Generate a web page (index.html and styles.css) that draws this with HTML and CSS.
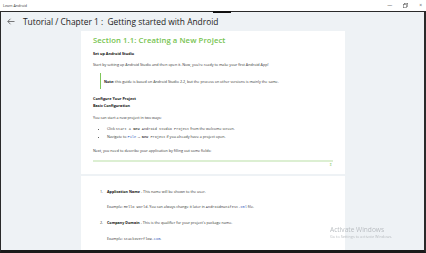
FILE: index.html
```html
<!DOCTYPE html>
<html lang="en">
  <head>
    <meta charset="UTF-8" />
    <title>Learn Android</title>
    <link rel="stylesheet" href="styles.css">
  </head>
  <body>
    <div class="titlebar">
      <span class="app-name">Learn Android</span>
      <div class="controls">
        <span class="ctl">&#8212;</span>
        <svg class="ctl-icon" width="5" height="5" viewBox="0 0 10 10"><rect x="3" y="0.5" width="6.5" height="6.5" fill="none" stroke="#555" stroke-width="1"/><rect x="0.5" y="3" width="6.5" height="6.5" fill="#fff" stroke="#555" stroke-width="1"/></svg>
        <span class="ctl">&#215;</span>
      </div>
    </div>
    <div class="tab-grip"></div>

    <div class="app">
      <div class="header">
        <svg class="back" width="8" height="7" viewBox="0 0 16 14"><path d="M15 7H2M7 1.5L1.5 7 7 12.5" fill="none" stroke="#444" stroke-width="1.4"/></svg>
        <h1>Tutorial / Chapter 1 :&nbsp; Getting started with Android</h1>
      </div>

      <div class="content">
        <div class="card">
          <h2>Section 1.1: Creating a New Project</h2>
          <h3>Set up Android Studio</h3>
          <p class="gap-s">Start by setting up Android Studio and then open it. Now, you're ready to make your first Android App!</p>
          <div class="note"><b>Note:</b> this guide is based on Android Studio 2.2, but the process on other versions is mainly the same.</div>
          <h3 class="gap-l">Configure Your Project</h3>
          <h3>Basic Configuration</h3>
          <p class="gap-m">You can start a new project in two ways:</p>
          <ul>
            <li>Click <code>Start a <b>New</b> Android Studio Project</code> from the welcome screen.</li>
            <li>Navigate to <code class="blue">File</code> &rarr; <code><b>New</b> Project</code> if you already have a project open.</li>
          </ul>
          <p class="gap-l">Next, you need to describe your application by filling out some fields:</p>
          <div class="code-bar"></div>
          <div class="bar-handle">&#8661;</div>
        </div>

        <div class="card second">
          <ol>
            <li>
              <span class="num">1.</span>
              <div>
                <p><b>Application Name</b> - This name will be shown to the user.</p>
                <p class="example">Example: <code>Hello World</code>. You can always change it later in <code>AndroidManifest.<span class="blue">xml</span></code> file.</p>
              </div>
            </li>
            <li>
              <span class="num">2.</span>
              <div>
                <p><b>Company Domain</b> - This is the qualifier for your project's package name.</p>
                <p class="example last">Example: <code>stackoverflow.<span class="blue">com</span></code>.</p>
              </div>
            </li>
          </ol>
        </div>
      </div>
    </div>

    <div class="activate">
      <div class="act-title">Activate Windows</div>
      <div class="act-sub">Go to Settings to activate Windows.</div>
    </div>
  </body>
</html>
```

FILE: styles.css
```css
* {
  margin: 0;
  padding: 0;
  box-sizing: border-box;
}

body {
  width: 426px;
  height: 253px;
  overflow: hidden;
  background: #fff;
  font-family: "Open Sans", "Noto Sans", sans-serif;
  color: #222;
}

.titlebar {
  height: 11px;
  display: flex;
  align-items: center;
  justify-content: space-between;
  padding: 0 4px 0 3px;
}

.app-name {
  font-size: 3.6px;
  color: #333;
}

.controls {
  display: flex;
  align-items: center;
  gap: 11px;
  color: #555;
}

.ctl {
  font-size: 5px;
  line-height: 1;
}

.tab-grip {
  position: absolute;
  left: 213px;
  top: 11px;
  width: 18px;
  height: 2px;
  background: #111;
}

.app {
  height: 242px;
  background: #eef2f5;
  border-top: 1px solid #2a2a2a;
  border-left: 1px solid #2a2a2a;
  border-right: 2px solid #2a2a2a;
  border-bottom: 3px solid #1a1a1a;
  display: flex;
  flex-direction: column;
  overflow: hidden;
}

.header {
  height: 19px;
  display: flex;
  align-items: center;
  gap: 8px;
  padding-left: 6px;
  flex-shrink: 0;
}

.header h1 {
  font-size: 8.4px;
  font-weight: 400;
  color: #1b1b1b;
  white-space: nowrap;
}

.content {
  padding-left: 80px;
  display: flex;
  flex-direction: column;
  gap: 2px;
}

.card {
  width: 264px;
  background: #fff;
  padding: 3px 12px 0 12px;
  font-size: 3.7px;
  line-height: 7px;
  color: #333;
}

.card:first-child {
  height: 143px;
}

.card h2 {
  font-size: 7.7px;
  line-height: 12px;
  font-weight: 600;
  color: #76c34f;
  letter-spacing: 0.1px;
}

.card h3 {
  font-size: 3.8px;
  font-weight: 700;
  color: #111;
}

.card h2 + h3 {
  margin-top: 4px;
}

.gap-s {
  margin-top: 4px;
}

.gap-m {
  margin-top: 5px;
}

.gap-l {
  margin-top: 6px;
}

.note {
  margin: 5px 0 0 7px;
  padding: 5px 0 4px 3px;
  border-left: 1px solid #7fc65a;
  line-height: 7px;
}

.note b {
  color: #111;
}

.card ul {
  margin-top: 4px;
  padding-left: 14px;
}

.card code {
  font-family: "Liberation Mono", "DejaVu Sans Mono", monospace;
  font-size: 3.6px;
  color: #444;
}

.blue,
.card code.blue {
  color: #3b5fc0;
}

.code-bar {
  margin-top: 6px;
  height: 2px;
  background: #dcefd2;
}

.bar-handle {
  text-align: right;
  font-size: 4px;
  line-height: 5px;
  color: #8ccc6c;
  padding-right: 1px;
}

.second {
  height: 80px;
  padding-top: 12px;
}

.card ol {
  list-style: none;
}

.card ol li {
  display: flex;
  gap: 3px;
  padding-left: 7px;
}

.card ol li + li {
  margin-top: 8px;
}

.num {
  width: 4px;
}

.card ol b {
  color: #111;
}

.example {
  margin-top: 8px;
}

.example.last {
  margin-top: 9px;
}

.activate {
  position: fixed;
  left: 330px;
  top: 225px;
  color: #b9bdc1;
}

.act-title {
  font-size: 6.6px;
  line-height: 9px;
}

.act-sub {
  font-size: 3.8px;
  line-height: 6px;
}
```
